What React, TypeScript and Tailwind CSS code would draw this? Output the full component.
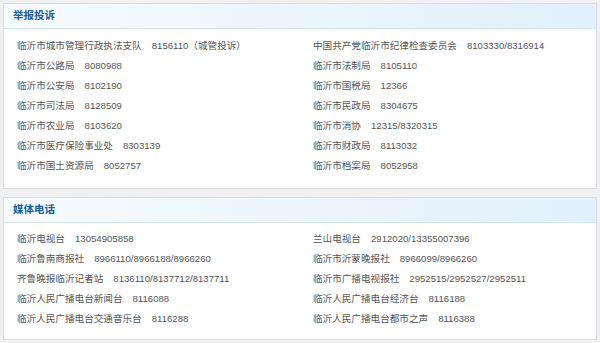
const complaints: [string, string][] = [
  ["临沂市城市管理行政执法支队", "8156110（城管投诉）"],
  ["中国共产党临沂市纪律检查委员会", "8103330/8316914"],
  ["临沂市公路局", "8080988"],
  ["临沂市法制局", "8105110"],
  ["临沂市公安局", "8102190"],
  ["临沂市国税局", "12366"],
  ["临沂市司法局", "8128509"],
  ["临沂市民政局", "8304675"],
  ["临沂市农业局", "8103620"],
  ["临沂市消协", "12315/8320315"],
  ["临沂市医疗保险事业处", "8303139"],
  ["临沂市财政局", "8113032"],
  ["临沂市国土资源局", "8052757"],
  ["临沂市档案局", "8052958"],
];

const media: [string, string][] = [
  ["临沂电视台", "13054905858"],
  ["兰山电视台", "2912020/13355007396"],
  ["临沂鲁南商报社", "8966110/8966188/8966260"],
  ["临沂市沂蒙晚报社", "8966099/8966260"],
  ["齐鲁晚报临沂记者站", "8136110/8137712/8137711"],
  ["临沂市广播电视报社", "2952515/2952527/2952511"],
  ["临沂人民广播电台新闻台", "8116088"],
  ["临沂人民广播电台经济台", "8116188"],
  ["临沂人民广播电台交通音乐台", "8116288"],
  ["临沂人民广播电台都市之声", "8116388"],
];

const Panel = ({ title, rows, pad }: { title: string; rows: [string, string][]; pad: string }) => {
  return (
    <div className="border border-[#d9dee4] bg-white">
      <div className="h-[25px] flex items-center px-[9px] border-b border-[#d3e3f0] bg-gradient-to-r from-[#f7fbfe] to-[#e1f0fb]">
        <span className="text-[10.5px] font-bold text-[#1d5d9c]">{title}</span>
      </div>
      <div className={`grid grid-cols-[296px_1fr] pl-[13px] ${pad}`}>
        {rows.map(([name, tel]) => (
          <div key={name} className="h-[20px] flex items-center whitespace-nowrap text-[9.6px] text-[#555]">
            <span>{name}</span>
            <span className="ml-[10px]">{tel}</span>
          </div>
        ))}
      </div>
    </div>
  );
};

export default function App() {
  return (
    <div
      className="w-[600px] h-[343px] bg-[#f1f1f1] px-[3px] pt-[3px] flex flex-col gap-[8px] overflow-hidden"
      style={{ fontFamily: '"Liberation Sans", "Noto Sans CJK SC", sans-serif' }}
    >
      <Panel title="举报投诉" rows={complaints} pad="pt-[7px] pb-[12px]" />
      <Panel title="媒体电话" rows={media} pad="pt-[6px] pb-[10px]" />
    </div>
  );
}
